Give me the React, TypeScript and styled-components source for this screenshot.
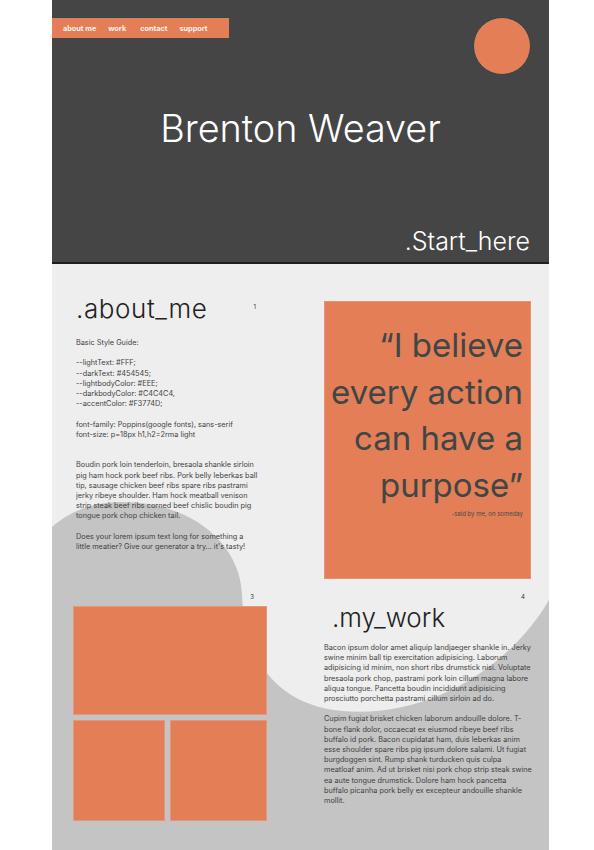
import React from "react";
import styled, { createGlobalStyle } from "styled-components";

const ACCENT = "#E37E56";
const DARK = "#454545";
const FONT = `"Inter", "Lato", "Liberation Sans", sans-serif`;

const GlobalStyle = createGlobalStyle`
  html, body { margin: 0; padding: 0; background: #ffffff; }
  body { font-family: ${FONT}; }
  * { box-sizing: border-box; }
`;

const Page = styled.div`
  width: 497px;
  margin-left: 52px;
`;

const Header = styled.header`
  height: 264px;
  background: ${DARK};
  border-bottom: 2px solid #1e1e1e;
  display: flex;
  flex-direction: column;
`;

const TopRow = styled.div`
  display: flex;
  justify-content: space-between;
  align-items: flex-start;
  padding: 17px 18px 0 0;
`;

const Nav = styled.nav`
  width: 177px;
  height: 21px;
  background: ${ACCENT};
  border-top: 1px solid #2c4848;
  display: flex;
  align-items: center;
  gap: 12px;
  padding-left: 11px;
`;

const NavLink = styled.a<{ $gap?: number }>`
  color: #fbf3ee;
  font-size: 7.3px;
  font-weight: 700;
  text-decoration: none;
  white-space: nowrap;
  margin-left: ${(p) => p.$gap ?? 0}px;
`;

const Circle = styled.div`
  width: 58px;
  height: 58px;
  border-radius: 50%;
  background: ${ACCENT};
  border: 1px solid #2c4848;
`;

const Title = styled.h1`
  margin: 35px 0 0;
  font-size: 37.8px;
  line-height: 1;
  font-weight: 300;
  color: #ffffff;
  text-align: center;
`;

const StartHere = styled.div`
  margin-top: auto;
  align-self: flex-end;
  padding: 0 19px 8px 0;
  font-size: 25px;
  line-height: 1;
  font-weight: 300;
  color: #ffffff;
`;

const Body = styled.main`
  position: relative;
  background: #eeeeee;
  min-height: 586px;
  overflow: hidden;
`;

const Wave = styled.svg`
  position: absolute;
  top: 0;
  left: 0;
  width: 497px;
  height: 586px;
`;

const Grid = styled.div`
  position: relative;
  display: grid;
  grid-template-columns: 248px 249px;
  grid-template-rows: 326px auto;
`;

const AboutCell = styled.section`
  padding: 31.5px 44px 0 24px;
`;

const HeadRow = styled.div`
  display: flex;
  justify-content: space-between;
  align-items: flex-start;
`;

const Heading = styled.h2<{ $indent?: number; $top?: number; $track?: number }>`
  margin: ${(p) => p.$top ?? 0}px 0 0 ${(p) => p.$indent ?? 0}px;
  font-size: 26px;
  line-height: 1;
  font-weight: 300;
  letter-spacing: ${(p) => p.$track ?? 0}px;
  color: #222222;
  white-space: nowrap;
`;

const Num = styled.span<{ $top?: number }>`
  display: block;
  margin-top: ${(p) => p.$top ?? 0}px;
  font-size: 6px;
  line-height: 8px;
  color: #333333;
`;

const NumRow = styled.div<{ $right: number }>`
  display: flex;
  justify-content: flex-end;
  padding-right: ${(p) => p.$right}px;
`;

const Text = styled.div<{ $top: number }>`
  margin-top: ${(p) => p.$top}px;
  font-size: 7.3px;
  line-height: 10.2px;
  color: #3f3f3f;
`;

const Line = styled.span`
  display: block;
  white-space: nowrap;
  min-height: 10.2px;
`;

const QuoteCell = styled.section`
  padding: 37px 18px 0 24px;
`;

const QuoteBox = styled.figure`
  margin: 0;
  height: 278px;
  background: ${ACCENT};
  border: 1px solid #e8906c;
  padding: 20px 7px 0 0;
  text-align: right;
  color: #3e4646;
`;

const QuoteText = styled.blockquote`
  margin: 0;
  font-size: 33px;
  line-height: 46.7px;
  font-weight: 400;
`;

const QuoteLine = styled.span`
  display: block;
  white-space: nowrap;
`;

const Attribution = styled.figcaption`
  font-size: 6px;
  line-height: 9px;
  color: #4a4a4a;
`;

const WorkImagesCell = styled.section`
  padding-top: 3px;
`;

const Gallery = styled.div`
  margin: 5px 0 0 21px;
  display: grid;
  grid-template-columns: 92px 97px;
  grid-template-rows: 109px 101px;
  column-gap: 5px;
  row-gap: 5px;
`;

const Tile = styled.div<{ $wide?: boolean }>`
  background: ${ACCENT};
  border: 1px solid #e8957a;
  grid-column: ${(p) => (p.$wide ? "1 / span 2" : "auto")};
`;

const WorkCell = styled.section`
  padding: 3px 0 40px 24px;
`;

const styleGuide = [
  "Basic Style Guide:",
  "",
  "--lightText: #FFF;",
  "--darkText: #454545;",
  "--lightbodyColor: #EEE;",
  "--darkbodyColor: #C4C4C4,",
  "--accentColor: #F3774D;",
  "",
  "font-family: Poppins(google fonts), sans-serif",
  "font-size: p=18px h1,h2=2rma light",
];

const about1 = [
  "Boudin pork loin tenderloin, bresaola shankle sirloin",
  "pig ham hock pork beef ribs. Pork belly leberkas ball",
  "tip, sausage chicken beef ribs spare ribs pastrami",
  "jerky ribeye shoulder. Ham hock meatball venison",
  "strip steak beef ribs corned beef chislic boudin pig",
  "tongue pork chop chicken tail.",
];

const about2 = [
  "Does your lorem ipsum text long for something a",
  "little meatier? Give our generator a try… it's tasty!",
];

const work1 = [
  "Bacon ipsum dolor amet aliquip landjaeger shankle in. Jerky",
  "swine minim ball tip exercitation adipisicing. Laborum",
  "adipisicing id minim, non short ribs drumstick nisi. Voluptate",
  "bresaola pork chop, pastrami pork loin cillum magna labore",
  "aliqua tongue. Pancetta boudin incididunt adipisicing",
  "prosciutto porchetta pastrami cillum sirloin ad do.",
];

const work2 = [
  "Cupim fugiat brisket chicken laborum andouille dolore. T-",
  "bone flank dolor, occaecat ex eiusmod ribeye beef ribs",
  "buffalo id pork. Bacon cupidatat ham, duis leberkas anim",
  "esse shoulder spare ribs pig ipsum dolore salami. Ut fugiat",
  "burgdoggen sint. Rump shank turducken quis culpa",
  "meatloaf anim. Ad ut brisket nisi pork chop strip steak swine",
  "ea aute tongue drumstick. Dolore ham hock pancetta",
  "buffalo picanha pork belly ex excepteur andouille shankle",
  "mollit.",
];

const quote = ["“I believe", "every action", "can have a", "purpose”"];

const Lines = ({ lines }: { lines: string[] }) => (
  <>
    {lines.map((l, i) => (
      <Line key={i}>{l || "\u00a0"}</Line>
    ))}
  </>
);

export default function App() {
  return (
    <>
      <GlobalStyle />
      <Page>
        <Header>
          <TopRow>
            <Nav>
              <NavLink href="#">about me</NavLink>
              <NavLink href="#">work</NavLink>
              <NavLink href="#" $gap={2}>contact</NavLink>
              <NavLink href="#">support</NavLink>
            </Nav>
            <Circle />
          </TopRow>
          <Title>Brenton Weaver</Title>
          <StartHere>.Start_here</StartHere>
        </Header>
        <Body>
          <Wave viewBox="0 0 497 586" aria-hidden="true">
            <path
              d="M0 263 C20 245 45 238 70 238 C140 238 188 280 190 330 C192 390 220 440 290 447 C380 455 460 400 497 336 L497 586 L0 586 Z"
              fill="#C4C4C4"
            />
          </Wave>
          <Grid>
            <AboutCell>
              <HeadRow>
                <Heading $track={0.6}>.about_me</Heading>
                <Num $top={7}>1</Num>
              </HeadRow>
              <Text $top={16.4}>
                <Lines lines={styleGuide} />
              </Text>
              <Text $top={20.4}>
                <Lines lines={about1} />
              </Text>
              <Text $top={10.2}>
                <Lines lines={about2} />
              </Text>
            </AboutCell>
            <QuoteCell>
              <QuoteBox>
                <QuoteText>
                  {quote.map((q, i) => (
                    <QuoteLine key={i}>{q}</QuoteLine>
                  ))}
                </QuoteText>
                <Attribution>-said by me, on someday</Attribution>
              </QuoteBox>
            </QuoteCell>
            <WorkImagesCell>
              <NumRow $right={46}>
                <Num>3</Num>
              </NumRow>
              <Gallery>
                <Tile $wide />
                <Tile />
                <Tile />
              </Gallery>
            </WorkImagesCell>
            <WorkCell>
              <NumRow $right={24}>
                <Num>4</Num>
              </NumRow>
              <Heading $indent={8} $top={3.5}>.my_work</Heading>
              <Text $top={12.4}>
                <Lines lines={work1} />
              </Text>
              <Text $top={10.2}>
                <Lines lines={work2} />
              </Text>
            </WorkCell>
          </Grid>
        </Body>
      </Page>
    </>
  );
}
